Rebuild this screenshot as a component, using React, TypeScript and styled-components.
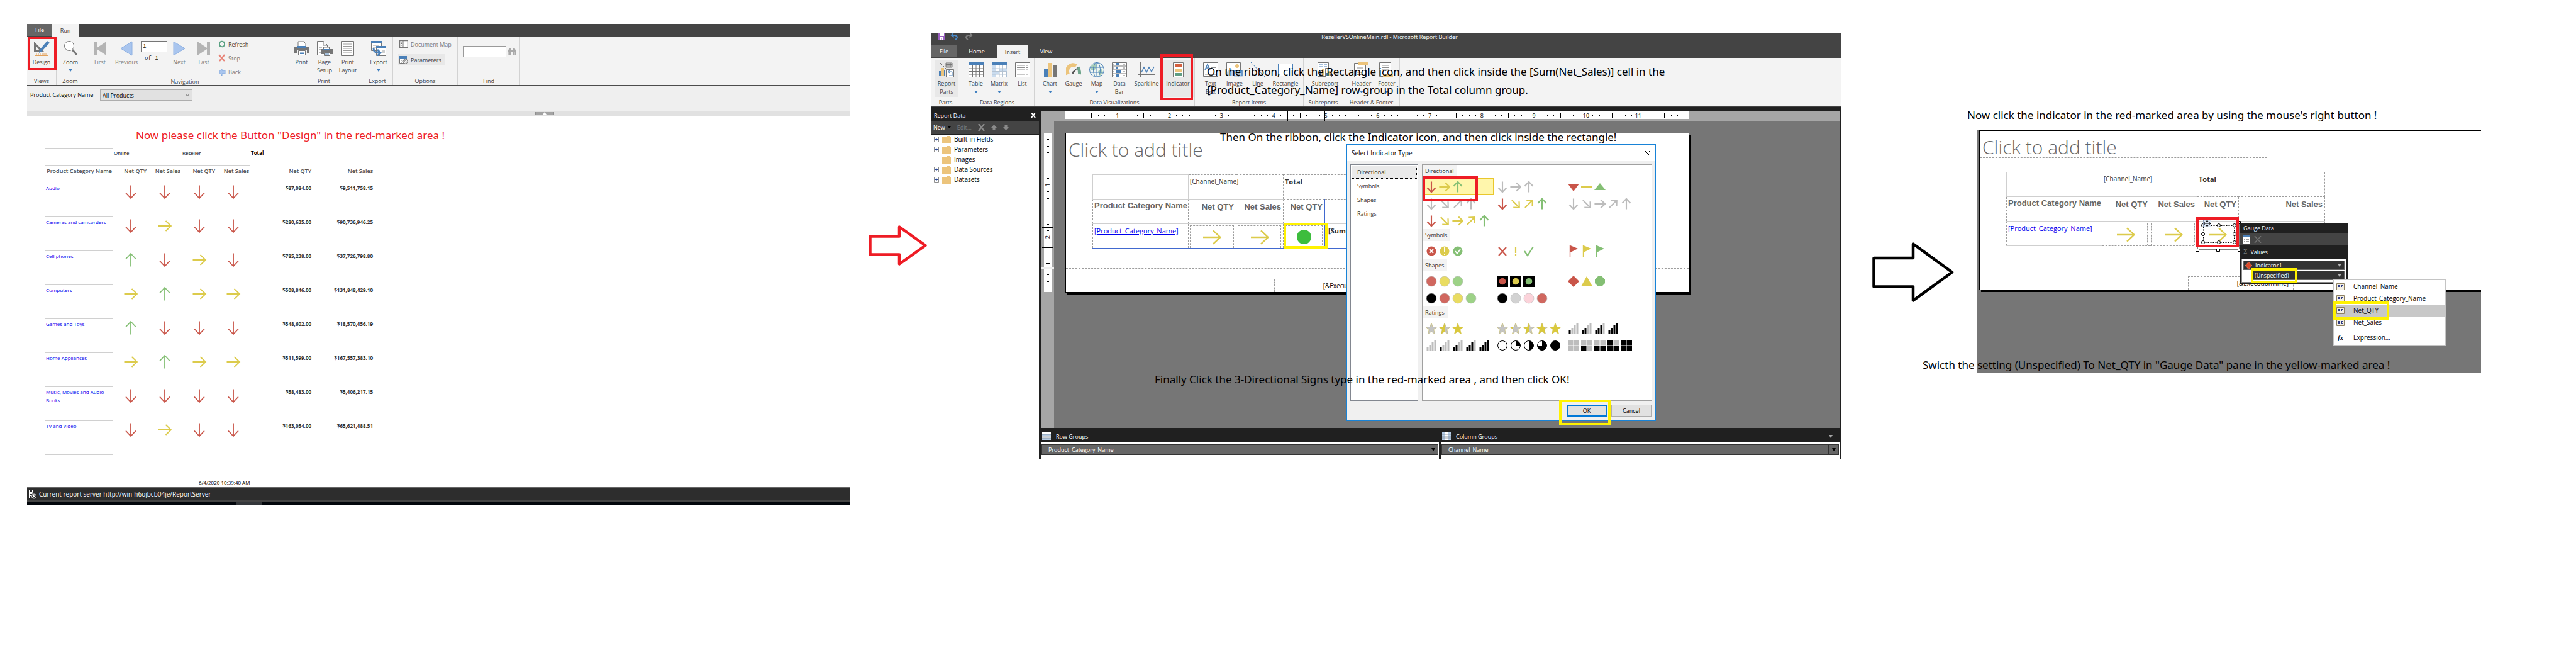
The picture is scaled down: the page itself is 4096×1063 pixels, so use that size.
import React from "react";
import styled, { createGlobalStyle, css } from "styled-components";

const UI = `"Open Sans", "Noto Sans", "Liberation Sans", sans-serif`;
const RED = "#ee1c25";
const YELLOW = "#fff200";
const DOWN = "#c95549";
const SIDE = "#dccb4c";
const UP = "#84bf74";
const MUTE = "#bcbcbc";

const GlobalStyle = createGlobalStyle`
  *, *::before, *::after { box-sizing: border-box; }
  body { margin: 0; background: #fff; color: #000; font-family: ${UI}; font-size: 9px; line-height: 13px; }
  button, input, select { font: inherit; color: inherit; margin: 0; }
  button { border: 0; background: none; padding: 0; }
  svg { display: block; flex: none; }
  p, h1, h2, ul { margin: 0; padding: 0; font-weight: inherit; font-size: inherit; list-style: none; }
`;

/* ---------- page frame ---------- */

const Page = styled.main`
  display: grid;
  grid-template-columns: 1309fr 129px 1446fr 217px 801fr;
  align-items: start;
  padding: 38px 151px 0 43px;
  min-height: 100vh;
  overflow: hidden;
`;

const Panel = styled.section<{ $drop: number }>`
  position: relative;
  min-width: 0;
  margin-top: ${(p) => p.$drop}px;
`;

const StepArrow = styled.div<{ $drop: number; $indent: number }>`
  margin-top: ${(p) => p.$drop}px;
  padding-left: ${(p) => p.$indent}px;
`;

const captionText = css`
  font-family: "Noto Sans", "Open Sans", sans-serif;
  font-size: 17px;
  line-height: 29px;
  white-space: nowrap;
`;

const LeadCaption = styled.p`
  ${captionText}
  margin: 16px 0 6px 173px;
  color: ${RED};
`;

const Caption = styled.p<{ $x: number; $y: number; $z?: number }>`
  ${captionText}
  position: absolute;
  left: ${(p) => p.$x}px;
  top: ${(p) => p.$y}px;
  z-index: ${(p) => p.$z ?? 4};
  pointer-events: none;
`;

const Mark = styled.div<{ $x: number; $y: number; $w: number; $h: number; $color: string }>`
  position: absolute;
  left: ${(p) => p.$x}px;
  top: ${(p) => p.$y}px;
  width: ${(p) => p.$w}px;
  height: ${(p) => p.$h}px;
  border: 4px solid ${(p) => p.$color};
  z-index: 5;
  pointer-events: none;
`;

/* ---------- ribbon ---------- */

const Ribbon = styled.div`
  display: flex;
  height: 77px;
  background: #f3f3f3;
  color: #444;
`;

const GroupBox = styled.div<{ $w: number; $pad: number }>`
  display: flex;
  flex-direction: column;
  justify-content: space-between;
  flex: none;
  width: ${(p) => p.$w}px;
  padding-top: 3px;
  border-right: 1px solid #d2d2d2;
  > div { display: flex; padding-left: ${(p) => p.$pad}px; }
  > span { text-align: center; }
`;

const Tool = styled.button<{ $w: number; $on?: boolean; $dim?: boolean }>`
  display: flex;
  flex-direction: column;
  align-items: center;
  flex: none;
  width: ${(p) => p.$w}px;
  min-height: 59px;
  padding: 4px 0 2px;
  background: ${(p) => (p.$on ? "#e8e8e8" : "transparent")};
  color: ${(p) => (p.$dim ? "#7c7c7c" : "#444")};
  white-space: nowrap;
  > svg:first-child { margin-bottom: 3px; }
`;

const DropMark = styled.i`
  width: 0;
  height: 0;
  margin-top: 5px;
  border: 3px solid transparent;
  border-top: 4px solid #3f7fc0;
  border-bottom: 0;
`;

const ToolStack = styled.div<{ $gap: number }>`
  display: flex;
  flex-direction: column;
  align-items: flex-start;
  gap: ${(p) => p.$gap}px;
`;

const LineTool = styled.button<{ $on?: boolean; $dim?: boolean }>`
  display: flex;
  align-items: center;
  gap: 4px;
  height: 18px;
  padding: 0 5px 0 2px;
  background: ${(p) => (p.$on ? "#e8e8e8" : "transparent")};
  color: ${(p) => (p.$dim ? "#7c7c7c" : "#444")};
`;

function Group({ w, pad = 6, title, children }: { w: number; pad?: number; title: string; children: React.ReactNode }) {
  return (
    <GroupBox $w={w} $pad={pad}>
      <div>{children}</div>
      <span>{title}</span>
    </GroupBox>
  );
}

/* ---------- ribbon icons ---------- */

const Svg = ({ w = 24, h = 24, children }: { w?: number; h?: number; children: React.ReactNode }) => (
  <svg width={w} height={h} viewBox={`0 0 ${w} ${h}`} fill="none" aria-hidden="true">
    {children}
  </svg>
);

const G = "#767676";
const B = "#4a80b8";
const Y = "#ecc47c";

const icons = {
  design: (
    <Svg w={26}>
      <path d="M1 1v17h17zM5 9l5 6H5z" fill={G} fillRule="evenodd" />
      <path d="M22 0l4 3-13 14-4 2 1-5z" fill={B} />
      <rect x="2.5" y="19.5" width="21" height="4" stroke="#e3a25c" />
      <path d="M5 20v2M8 20v2M11 20v2M14 20v2M17 20v2M20 20v2" stroke="#e3a25c" />
    </Svg>
  ),
  zoom: (
    <Svg>
      <circle cx="10" cy="8" r="7.5" fill="#fff" stroke={G} />
      <path d="M15 14l7 8" stroke={G} strokeWidth="3" />
    </Svg>
  ),
  first: (
    <Svg w={22}>
      <path d="M1 1h5v10L21 1v22L6 13v10H1z" fill="#b4b4b4" />
    </Svg>
  ),
  last: (
    <Svg w={22}>
      <path d="M21 1h-5v10L1 1v22l15-10v10h5z" fill="#b4b4b4" />
    </Svg>
  ),
  prev: (
    <Svg w={20}>
      <path d="M19 1v22L1 12z" fill="#a9c5ee" stroke="#8fb1e2" />
    </Svg>
  ),
  next: (
    <Svg w={20}>
      <path d="M1 1v22l18-11z" fill="#a9c5ee" stroke="#8fb1e2" />
    </Svg>
  ),
  refresh: (
    <Svg w={12} h={12}>
      <path d="M2 7V4q3-4 7-1M10 5v3q-3 4-7 1" stroke="#5aa183" strokeWidth="2" />
      <path d="M11 0v5H7zM1 12V7h4z" fill="#5aa183" />
    </Svg>
  ),
  stop: (
    <Svg w={12} h={12}>
      <path d="M1 1l9 10M10 1L2 11" stroke="#e88478" strokeWidth="2.4" />
    </Svg>
  ),
  back: (
    <Svg w={12} h={12}>
      <path d="M6 1v3h5v5H6v3L1 6.500z" fill="#a9c5ee" stroke="#83a9dd" />
    </Svg>
  ),
  print: (
    <Svg>
      <path d="M6 10V1h9l3 3v6" fill="#fff" stroke={G} />
      <path d="M0 9h24v10h-4v-4H4v4H0z" fill={G} />
      <path d="M5 8h14v3H5z" fill={B} />
      <path d="M6.500 15.500h11v7h-11z" fill="#fff" stroke={G} />
      <path d="M9 18h6M9 20.500h6" stroke={B} />
    </Svg>
  ),
  pageSetup: (
    <Svg w={26}>
      <path d="M1.500.5h10l6 6v16h-16zM11 1v6h6" fill="#fff" stroke={G} />
      <path d="M4 10h5M4 14h3M4 18h3" stroke={G} />
      <path d="M11.500 14v-4h9v4" fill="#fff" stroke={G} />
      <path d="M8 13h18v8H8z" fill={G} />
      <path d="M11 13h11v2H11z" fill={B} />
      <path d="M12.500 18.500h9v5h-9z" fill="#fff" stroke={G} />
      <path d="M14 21h6" stroke={B} />
    </Svg>
  ),
  layout: (
    <Svg w={20}>
      <path d="M.5.5h19v23H.5z" fill="#fff" stroke={G} />
      <path d="M3 5h14M3 8.500h14M3 12h14M3 15.500h14M3 19h14" stroke="#9a9a9a" />
    </Svg>
  ),
  export: (
    <Svg>
      <path d="M.5.5h16v15H.5z" fill="#fff" stroke={G} />
      <path d="M0 0h17v4H0z" fill={B} />
      <path d="M3 7h9M3 10h9" stroke="#9a9a9a" />
      <path d="M8.500 8.500h15v15h-15z" fill="#fff" stroke={G} />
      <path d="M8 8h16v4H8z" fill={B} />
      <path d="M4 12q0 7 9 7M10 14l5 5-5 5" stroke={B} strokeWidth="3" />
      <path d="M17 16h5M17 19h5" stroke="#9a9a9a" />
    </Svg>
  ),
  docMap: (
    <Svg w={14} h={12}>
      <path d="M.5.5h13v11H.5z" fill="#fff" stroke={G} strokeWidth="1.500" />
      <path d="M2 3h3M2 5.500h3M2 8h3M6 1v10" stroke={G} />
    </Svg>
  ),
  params: (
    <Svg w={14} h={13}>
      <path d="M.5.5h11v11H.5z" fill="#fff" stroke={G} />
      <path d="M0 0h12v4H0z" fill={B} />
      <path d="M2 7h3M2 10h3" stroke={G} />
      <circle cx="9.500" cy="8.500" r="3.500" fill="#f3f3f3" stroke={G} />
      <circle cx="9.500" cy="8.500" r="1.200" stroke={G} />
    </Svg>
  ),
  find: (
    <Svg w={14} h={12}>
      <path d="M3 0h3v12H0V6zM8 0h3l3 6v6H8zM6 4h2v3H6z" fill="#a9a9a9" />
      <path d="M2 7v4M11 7v4" stroke="#ddd" />
    </Svg>
  ),
  parts: (
    <Svg>
      <path d="M1 0l10 10" stroke={G} />
      <path d="M11 1h10v7H11zM11 3.500h10M11 6h10M14.500 1v7M18 1v7" stroke={G} />
      <path d="M0 14h3v7H0zM8 13h2v8H8z" fill={B} />
      <path d="M4 9h4v12H4z" fill={Y} />
      <path d="M11.500 11.500h12v12h-12z" fill="#fff" stroke={G} />
      <path d="M14 15h7v6h-5M17 13l-3 2 3 2" stroke={B} />
    </Svg>
  ),
  table: (
    <Svg>
      <path d="M.5.5h23v23H.5z" fill="#fff" stroke={G} />
      <path d="M0 0h24v5H0z" fill={B} />
      <path d="M0 10h24M0 14.500h24M0 19h24M6.500 5v19M12 5v19M17.500 5v19" stroke={G} />
    </Svg>
  ),
  matrix: (
    <Svg>
      <path d="M.5.5h23v23H.5z" fill="#fff" stroke="#a9bdd3" />
      <path d="M0 5h6v19H0zM6 14h6v5H6zM12 10h12v5H12z" fill="#cadcef" />
      <path d="M0 0h24v5H0z" fill={B} />
      <path d="M0 10h24M0 14.500h24M0 19h24M6.500 5v19M12 5v19M17.500 5v19" stroke="#b5c3d2" />
    </Svg>
  ),
  list: (
    <Svg>
      <path d="M.5.5h23v23H.5z" fill="#fff" stroke={G} />
      <path d="M3 5h13M3 8.500h13M3 12h13M3 15.500h13M3 19h13M18 5h3M18 8.500h3M18 12h3M18 15.500h3M18 19h3" stroke="#8f8f8f" />
    </Svg>
  ),
  chart: (
    <Svg w={20}>
      <path d="M0 10h6v14H0z" fill={B} />
      <path d="M7 1h6v23H7z" fill={Y} />
      <path d="M14 5h6v19h-6z" fill={G} />
    </Svg>
  ),
  gauge: (
    <Svg>
      <path d="M3 19A9 10 0 0 1 16 6" stroke={Y} strokeWidth="6" />
      <path d="M19 8q3 4 2.500 11" stroke="#6fa58c" strokeWidth="5" />
      <path d="M20 7L9 16l2 3z" fill="#555" />
    </Svg>
  ),
  map: (
    <Svg>
      <circle cx="12" cy="12" r="11.500" fill="#eef5f1" stroke={B} />
      <path d="M3 6q5-6 9-2l-2 7q-5 3-8 0zM14 14l6-3 2 5-5 6z" fill="#a6cdb9" />
      <ellipse cx="12" cy="12" rx="5.500" ry="11.500" stroke={B} />
      <path d="M12 0v24M1 8h22M1 16h22" stroke={B} />
    </Svg>
  ),
  dataBar: (
    <Svg>
      <path d="M.5.5h23v23H.5zM0 6h24M0 12h24M0 18h24M14.500 0v24" fill="#fff" stroke={G} />
      <path d="M6 1h6v4H6zM6 7h4v4H6zM6 13h8v4H6zM6 19h5v4H6z" fill={B} />
      <path d="M17 3h4M17 9h4M17 15h4M17 21h4M2 3h2M2 9h2M2 15h2M2 21h2" stroke={G} />
    </Svg>
  ),
  spark: (
    <Svg w={26}>
      <path d="M3.500 0v24M0 4.500h26M0 19.500h26" stroke={G} />
      <path d="M5 16l4-8 4 8 4-8 4 7 4-8" stroke={B} strokeWidth="1.400" />
    </Svg>
  ),
  indicator: (
    <Svg w={17}>
      <path d="M.5.5h16v23H.5z" fill="#fff" stroke={G} />
      <path d="M3 3h11v5H3z" fill="#d4603f" />
      <path d="M3 10h11v5H3z" fill={Y} />
      <path d="M3 17h11v5H3z" fill="#5f9d83" />
    </Svg>
  ),
  textBox: (
    <Svg>
      <path d="M.5.500h23v22H.5z" fill="#fff" stroke={G} />
      <path d="M3 12l4-9 4 9M4.500 9h5" stroke={B} strokeWidth="1.400" />
      <path d="M12 4.500h9M12 8.500h9M3 15.500h18M3 19h18" stroke="#8f8f8f" />
    </Svg>
  ),
  image: (
    <Svg w={26}>
      <path d="M.5.500h22v21H.5z" fill="#fff" stroke={G} />
      <circle cx="17" cy="6" r="3" fill={Y} />
      <path d="M1 21v-6l6-5 6 6v5z" fill="#b8cfe6" />
      <path d="M13 13.500h12v8H13z" fill="#dfeaf5" stroke={B} strokeWidth="1.600" />
      <path d="M19 22v2M16 24h6" stroke={B} />
    </Svg>
  ),
  line: (
    <Svg>
      <path d="M1 0l22 23" stroke={B} />
    </Svg>
  ),
  rect: (
    <Svg>
      <path d="M.5 2.500h23v19H.5z" fill="#fff" stroke={B} strokeWidth="1.200" />
    </Svg>
  ),
  subreport: (
    <Svg>
      <path d="M.5.500h17v22H.5z" fill="#fff" stroke={G} />
      <path d="M3 4h5M3 7h5M10 4h5M10 7h5" stroke={B} />
      <path d="M3 14h3v7H3z" fill={B} />
      <path d="M7 10h3v11H7z" fill={Y} />
      <path d="M12.500 9.500h10v14h-10z" fill="#fff" stroke={G} />
      <path d="M14 17h2v5h-2z" fill={B} />
      <path d="M17 14h2v8h-2z" fill={Y} />
      <path d="M20 18h2v4h-2z" fill={G} />
    </Svg>
  ),
  header: (
    <Svg>
      <path d="M.5 1.500h18v22H.5z" fill="#fff" stroke={G} />
      <path d="M7 0h15v5H7z" fill={Y} />
      <path d="M4 9h11M4 12.500h11M4 16h11M4 19.500h11" stroke="#8f8f8f" />
    </Svg>
  ),
  footer: (
    <Svg>
      <path d="M.5.500h18v22H.5z" fill="#fff" stroke={G} />
      <path d="M4 5h11M4 8.500h11M4 12h11M4 15.500h11" stroke="#8f8f8f" />
      <path d="M6 19h16v5H6z" fill={Y} />
    </Svg>
  ),
};

/* ---------- indicator glyphs ---------- */

const TURN = { right: 0, down: 90, up: -90, fall: 45, rise: -45 };
type Dir = keyof typeof TURN;

function Arrow({ dir, color, size = 24, box = "0 0 24 24", weight = 1.8 }: { dir: Dir; color: string; size?: number; box?: string; weight?: number }) {
  return (
    <svg width={size} height={size} viewBox={box} fill="none" stroke={color} strokeWidth={weight} aria-hidden="true">
      <g transform={`rotate(${TURN[dir]} 12 12)`}>
        <path d="M1.500 12H22M13.500 4l8.500 8-8.500 8" />
      </g>
    </svg>
  );
}

const Glyph = ({ children }: { children: React.ReactNode }) => (
  <svg width="18" height="18" viewBox="0 0 18 18" fill="none" aria-hidden="true">
    {children}
  </svg>
);

const A = (dir: Dir, color: string) => <Arrow dir={dir} color={color} size={18} box="1 1 22 22" weight={2.6} />;
const Dot = (color: string) => (
  <Glyph>
    <circle cx="9" cy="9" r="8" fill={color} stroke="#b9b9b9" strokeWidth=".6" />
  </Glyph>
);
const Lamp = (color: string) => (
  <Glyph>
    <path d="M0 0h18v18H0z" fill="#000" />
    <circle cx="9" cy="9" r="5.300" fill={color} />
  </Glyph>
);
const Flag = (color: string) => (
  <Glyph>
    <path d="M3.500 0v18" stroke={color} strokeWidth="1.400" />
    <path d="M4 0l12 5-12 6z" fill={color} />
  </Glyph>
);
const Shape = (d: string, color: string) => (
  <Glyph>
    <path d={d} fill={color} />
  </Glyph>
);
const Round = (color: string, d: string) => (
  <Glyph>
    <circle cx="9" cy="9" r="7.500" fill={color} />
    <path d={d} stroke="#fff" strokeWidth="1.800" />
  </Glyph>
);
const Stroke = (color: string, d: string, w = 2.2) => (
  <Glyph>
    <path d={d} stroke={color} strokeWidth={w} />
  </Glyph>
);
const STAR = "M9 0l2.300 6.500H18l-5.300 4.200 2 7.300L9 13.700 3.300 18l2-7.300L0 6.500h6.700z";
const Star = (part: number) => {
  const id = `star-${part * 100}`;
  return (
    <Glyph>
      <defs>
        <linearGradient id={id}>
          <stop offset={part} stopColor="#dac93c" />
          <stop offset={part} stopColor="#c4c4c4" />
        </linearGradient>
      </defs>
      <path d={STAR} fill={`url(#${id})`} stroke={part === 1 ? "#d3c34a" : "#c2b75e"} strokeWidth=".6" />
    </Glyph>
  );
};
const Bars = (n: number) => (
  <Glyph>
    {[0, 1, 2, 3].map((i) => (
      <path key={i} d={`M${1.5 + i * 4} ${12 - i * 4}h3V18h-3z`} fill={i < n ? "#000" : "#bdbdbd"} />
    ))}
  </Glyph>
);
const PIE = ["", "M9 9V1.500A7.500 7.500 0 0 1 16.500 9z", "M9 1.500a7.500 7.500 0 0 1 0 15z", "M9 9V1.500A7.500 7.500 0 1 1 1.500 9z", ""];
const Pie = (n: number) => (
  <Glyph>
    <circle cx="9" cy="9" r="7.500" fill={n === 4 ? "#000" : "#fff"} stroke="#000" />
    <path d={PIE[n]} fill="#000" />
  </Glyph>
);
const Boxes = (n: number) => (
  <Glyph>
    {["M0 9.500h8.500V18H0z", "M9.500 9.500H18V18H9.500z", "M0 0h8.500v8.500H0z", "M9.500 0H18v8.500H9.500z"].map((d, i) => (
      <path key={i} d={d} fill={i < n ? "#000" : "#bdbdbd"} />
    ))}
  </Glyph>
);

const R = "#d0675f";
const YL = "#e9dc62";
const GR = "#9dd287";

const SECTIONS: { name: string; options: React.ReactNode[][] }[] = [
  {
    name: "Directional",
    options: [
      [A("down", DOWN), A("right", SIDE), A("up", UP)],
      [A("down", MUTE), A("right", MUTE), A("up", MUTE)],
      [Shape("M0 4h18L9 16z", DOWN), Shape("M0 7h18v4H0z", SIDE), Shape("M0 14h18L9 3z", UP)],
      [A("down", MUTE), A("fall", MUTE), A("rise", MUTE), A("up", MUTE)],
      [A("down", DOWN), A("fall", SIDE), A("rise", SIDE), A("up", UP)],
      [A("down", MUTE), A("fall", MUTE), A("right", MUTE), A("rise", MUTE), A("up", MUTE)],
      [A("down", DOWN), A("fall", SIDE), A("right", SIDE), A("rise", SIDE), A("up", UP)],
    ],
  },
  {
    name: "Symbols",
    options: [
      [Round(DOWN, "M6 6l6 6M12 6l-6 6"), Round(SIDE, "M9 3v8M9 13v2"), Round(UP, "M5 9l3 4 5-7")],
      [Stroke(DOWN, "M3 3l12 13M15 3L3 16"), Stroke(SIDE, "M9 2v10M9 14v3"), Stroke(UP, "M2 9l5 7 9-14")],
      [Flag(DOWN), Flag(SIDE), Flag(UP)],
    ],
  },
  {
    name: "Shapes",
    options: [
      [Dot(R), Dot(YL), Dot(GR)],
      [Lamp(DOWN), Lamp(SIDE), Lamp(UP)],
      [
        Shape("M9 0l9 9-9 9-9-9z", DOWN),
        Shape("M9 1l9 16H0z", SIDE),
        Shape("M6 1h6l5 5v6l-5 5H6l-5-5V6z", UP),
      ],
      [Dot("#000"), Dot(R), Dot(YL), Dot(GR)],
      [Dot("#000"), Dot("#d2d2d2"), Dot("#fbd3da"), Dot(R)],
    ],
  },
  {
    name: "Ratings",
    options: [
      [Star(0), Star(0.5), Star(1)],
      [Star(0), Star(0.25), Star(0.5), Star(0.75), Star(1)],
      [Bars(1), Bars(2), Bars(3), Bars(4)],
      [Bars(0), Bars(1), Bars(2), Bars(3), Bars(4)],
      [Pie(0), Pie(1), Pie(2), Pie(3), Pie(4)],
      [Boxes(0), Boxes(1), Boxes(2), Boxes(3), Boxes(4)],
    ],
  },
];

/* ---------- panel 1 : running report ---------- */

const TabBar = styled.nav`
  display: flex;
  height: 20px;
  background: #444;
`;

const Tab = styled.button<{ $w: number; $kind?: "file" | "active" }>`
  width: ${(p) => p.$w}px;
  height: ${(p) => (p.$kind === "active" ? "100%" : "19px")};
  background: ${(p) => (p.$kind === "file" ? "#666" : p.$kind === "active" ? "#f3f3f3" : "transparent")};
  color: ${(p) => (p.$kind === "active" ? "#444" : "#fff")};
  & + &[data-gap] { margin-left: 8px; }
`;

const PageNo = styled.div`
  display: flex;
  flex-direction: column;
  width: 42px;
  margin-right: 1px;
  padding-top: 4px;
  color: #222;
  font-family: "Liberation Mono", monospace;
  label { padding: 4px 0 0 6px; }
  input { width: 42px; height: 18px; border: 1px solid #767676; background: #fff; padding: 0 2px; }
`;

const FindBox = styled.div`
  display: flex;
  align-items: center;
  gap: 2px;
  padding-top: 12px;
  input { width: 69px; height: 18px; border: 1px solid #9a9a9a; background: #fff; }
`;

const ParamBar = styled.div`
  height: 42px;
  padding: 5px;
  display: flex;
  align-items: flex-start;
  gap: 10px;
  border-top: 2px solid #4c4c4c;
  background: #efefef;
  label { line-height: 18px; width: 101px; white-space: nowrap; }
`;

const SelectBox = styled.div`
  position: relative;
  width: 147px;
  height: 18px;
  select {
    appearance: none;
    width: 100%;
    height: 100%;
    padding: 0 3px;
    border: 1px solid #adadad;
    border-radius: 0;
    background: #e1e1e1;
  }
  svg { position: absolute; right: 4px; top: 6px; pointer-events: none; }
`;

const Splitter = styled.div`
  height: 7px;
  background: #e1e1e1;
  padding: 1px 0 0 808px;
  button { display: flex; justify-content: center; width: 30px; height: 5px; background: #a3a3a3; border: 1px solid #8e8e8e; border-top: 0; }
`;

const DataTable = styled.table`
  width: 524px;
  margin-left: 28px;
  table-layout: fixed;
  border-collapse: separate;
  border-spacing: 0;
  font-size: 8px;
  line-height: 13px;
  th, td { padding: 0; vertical-align: top; text-align: right; white-space: nowrap; }
`;

const BandHead = styled.th<{ $kind?: "corner" | "total" }>`
  && { height: 28px; padding: 1px; text-align: left; font-weight: ${(p) => (p.$kind === "total" ? 700 : 400)}; }
  border-bottom: ${(p) => (p.$kind === "total" ? 0 : "1px solid #d0d0d0")};
  ${(p) => p.$kind === "corner" && css`border: 1px solid #d0d0d0;`}
`;

const ColHead = styled.th`
  && { height: 28px; padding: 2px 2px 0 0; }
  border-bottom: 1px solid #d0d0d0;
  color: #555;
  font-size: 9px;
  font-weight: 600;
`;

const NameCell = styled.th`
  && { height: 54px; padding: 1px 2px; text-align: left; white-space: normal; font-weight: 400; }
  border-bottom: 1px solid #d0d0d0;
  a { color: #0000ee; }
`;

const SignCell = styled.td`
  && { padding-top: 2px; }
  svg { margin: 0 auto; }
`;

const MoneyCell = styled.td`
  && { padding: 1px 2px 0 0; }
  color: #333;
  font-weight: 700;
`;

const Stamp = styled.p`
  margin: 37px 0 1px 273px;
  font-size: 8px;
`;

const StatusBar = styled.footer`
  display: flex;
  align-items: center;
  gap: 4px;
  height: 23px;
  padding-left: 3px;
  border-top: 2px solid #666;
  border-bottom: 3px solid #444;
  background: #2d2d2d;
  color: #fff;
  font-size: 10px;
`;

const TaskStrip = styled.div`
  height: 6px;
  padding-left: 332px;
  background: #02060c;
  i { display: block; width: 42px; height: 6px; background: #33363a; }
`;

const ROWS: [string, string, string, string][] = [
  ["Audio", "dddd", "$87,084.00", "$9,511,758.15"],
  ["Cameras and camcorders", "drdd", "$280,635.00", "$90,736,946.25"],
  ["Cell phones", "udrd", "$785,238.00", "$37,726,798.80"],
  ["Computers", "rurr", "$508,846.00", "$131,848,429.10"],
  ["Games and Toys", "uddd", "$548,602.00", "$18,570,456.19"],
  ["Home Appliances", "rurr", "$511,599.00", "$167,557,383.10"],
  ["Music, Movies and Audio Books", "dddd", "$58,483.00", "$5,406,217.15"],
  ["TV and Video", "drdd", "$163,054.00", "$65,621,488.51"],
];

const SIGN: Record<string, [Dir, string]> = { d: ["down", DOWN], r: ["right", SIDE], u: ["up", UP] };

function RunPanel() {
  return (
    <Panel $drop={0}>
      <TabBar>
        <Tab $w={40} $kind="file">File</Tab>
        <Tab $w={42} $kind="active" data-gap>Run</Tab>
      </TabBar>
      <Ribbon>
        <Group w={47} pad={0} title="Views">
          <Tool $w={46}>{icons.design}<span>Design</span></Tool>
        </Group>
        <Group w={44} pad={0} title="Zoom">
          <Tool $w={44}>{icons.zoom}<span>Zoom</span><DropMark /></Tool>
        </Group>
        <Group w={321} title="Navigation">
          <Tool $w={38} $dim>{icons.first}<span>First</span></Tool>
          <Tool $w={46} $dim>{icons.prev}<span>Previous</span></Tool>
          <PageNo>
            <input id="page-no" defaultValue="1" />
            <label htmlFor="page-no">of 1</label>
          </PageNo>
          <Tool $w={36} $dim>{icons.next}<span>Next</span></Tool>
          <Tool $w={42} $dim>{icons.last}<span>Last</span></Tool>
          <ToolStack $gap={4}>
            <LineTool>{icons.refresh}Refresh</LineTool>
            <LineTool $dim>{icons.stop}Stop</LineTool>
            <LineTool $dim>{icons.back}Back</LineTool>
          </ToolStack>
        </Group>
        <Group w={121} title="Print">
          <Tool $w={37}>{icons.print}<span>Print</span></Tool>
          <Tool $w={36}>{icons.pageSetup}<span>Page<br />Setup</span></Tool>
          <Tool $w={38}>{icons.layout}<span>Print<br />Layout</span></Tool>
        </Group>
        <Group w={49} pad={3} title="Export">
          <Tool $w={46}>{icons.export}<span>Export</span><DropMark /></Tool>
        </Group>
        <Group w={103} pad={8} title="Options">
          <ToolStack $gap={7}>
            <LineTool $dim>{icons.docMap}Document Map</LineTool>
            <LineTool $on>{icons.params}Parameters</LineTool>
          </ToolStack>
        </Group>
        <Group w={99} pad={8} title="Find">
          <FindBox>
            <input aria-label="Find" />
            {icons.find}
          </FindBox>
        </Group>
      </Ribbon>
      <ParamBar>
        <label htmlFor="category">Product Category Name</label>
        <SelectBox>
          <select id="category">
            <option>All Products</option>
          </select>
          <svg width="8" height="6" viewBox="0 0 8 6" fill="none" stroke="#555" aria-hidden="true">
            <path d="M.5 1L4 4.500 7.500 1" />
          </svg>
        </SelectBox>
      </ParamBar>
      <Splitter>
        <button aria-label="Collapse parameters">
          <svg width="6" height="4" viewBox="0 0 6 4" aria-hidden="true"><path d="M3 0l3 4H0z" fill="#fff" /></svg>
        </button>
      </Splitter>
      <LeadCaption>Now please click the Button "Design" in the red-marked area !</LeadCaption>
      <DataTable>
        <colgroup>
          {[109, 55, 54, 55, 54, 99, 98].map((w, i) => (
            <col key={i} style={{ width: w }} />
          ))}
        </colgroup>
        <thead>
          <tr>
            <BandHead $kind="corner" />
            <BandHead colSpan={2}>Online</BandHead>
            <BandHead colSpan={2}>Reseller</BandHead>
            <BandHead colSpan={2} $kind="total">Total</BandHead>
          </tr>
          <tr>
            {["Product Category Name", "Net QTY", "Net Sales", "Net QTY", "Net Sales", "Net QTY", "Net Sales"].map((t, i) => (
              <ColHead key={i}>{t}</ColHead>
            ))}
          </tr>
        </thead>
        <tbody>
          {ROWS.map(([name, signs, qty, sales]) => (
            <tr key={name}>
              <NameCell><a href="#category">{name}</a></NameCell>
              {signs.split("").map((s, i) => (
                <SignCell key={i}><Arrow dir={SIGN[s][0]} color={SIGN[s][1]} /></SignCell>
              ))}
              <MoneyCell>{qty}</MoneyCell>
              <MoneyCell>{sales}</MoneyCell>
            </tr>
          ))}
        </tbody>
      </DataTable>
      <Stamp>6/4/2020 10:39:40 AM</Stamp>
      <StatusBar>
        <svg width="12" height="15" viewBox="0 0 12 15" fill="none" stroke="#fff" aria-hidden="true">
          <path d="M.5.500h5v4h-5zM.5 6.500h5M.5 4v10M.5 9.500h3M.5 13.500h3" />
          <circle cx="8" cy="10.500" r="3.500" />
          <path d="M7 8.500l3 2-3 2z" fill="#fff" stroke="none" />
        </svg>
        Current report server http://win-h6ojbcb04je/ReportServer
      </StatusBar>
      <TaskStrip><i /></TaskStrip>
      <Mark $x={1} $y={20} $w={46} $h={54} $color={RED} />
    </Panel>
  );
}

/* ---------- shared report design page ---------- */

const Sheet = styled.div`
  width: 992px;
  border: 1px solid #000;
  background: #fff;
  box-shadow: 3px 3px 0 #000;
`;

const SheetBody = styled.div`
  height: 215px;
  border-bottom: 1px dashed #9c9c9c;
`;

const TitleBox = styled.h1`
  width: 457px;
  height: 43px;
  padding-left: 4px;
  border: dashed #9c9c9c;
  border-width: 0 1px 1px 0;
  color: #666;
  font-size: 30px;
  font-weight: 300;
  line-height: 52px;
`;

const Matrix = styled.table`
  width: 507px;
  margin: 22px 0 0 42px;
  table-layout: fixed;
  border-collapse: collapse;
  td, th { height: 39px; padding: 3px 2px 0; border: 1px dashed #9c9c9c; vertical-align: top; white-space: nowrap; text-align: left; line-height: 15px; }
`;

const Head = styled.th<{ $text?: number; $solid?: boolean; $bold?: boolean }>`
  && {
    color: #333;
    font-size: ${(p) => p.$text ?? 11}px;
    font-weight: ${(p) => (p.$bold ? 700 : 400)};
    ${(p) => p.$solid && css`border: 1px solid #cfcfcf;`}
    ${(p) => !p.$bold && css`border-bottom: 1px solid #cfcfcf;`}
  }
`;

const SubHead = styled.th<{ $blue?: boolean; $left?: boolean }>`
  && {
    padding-right: 3px;
    padding-top: ${(p) => (p.$left ? 2 : 4)}px;
    color: #666;
    font-family: "Liberation Sans", Arial, sans-serif;
    font-size: 13px;
    font-weight: 700;
    text-align: ${(p) => (p.$left ? "left" : "right")};
    border-bottom: 1px solid #cfcfcf;
    ${(p) => p.$blue && css`border-left: 1px solid #4169cf;`}
  }
`;

const BodyCell = styled.td<{ $blue?: boolean; $blueLeft?: boolean; $solid?: boolean }>`
  && {
    font-size: 11px;
    ${(p) => p.$solid && css`border-bottom: 1px solid #cfcfcf;`}
    ${(p) => p.$blue && css`border-bottom: 1px solid #4169cf;`}
    ${(p) => p.$blueLeft && css`border-left: 1px solid #4169cf; padding-left: 5px; font-weight: 700; color: #333;`}
  }
  a { color: #0000ee; }
`;

const SignBody = styled(BodyCell)`
  && { padding: 2px 3px 0 2px; }
`;

const SignFrame = styled.div`
  display: flex;
  justify-content: center;
  align-items: center;
  height: 36px;
  border: 1px dashed #9c9c9c;
  border-bottom: 0;
`;

const FooterArea = styled.div`
  padding: 16px 0 0 331px;
  div {
    width: 168px;
    height: 21px;
    padding-right: 7px;
    border: dashed #9c9c9c;
    border-width: 1px 1px 0;
    font-size: 10px;
    line-height: 21px;
    text-align: right;
  }
`;

function ReportSheet({ finished }: { finished?: boolean }) {
  const blue = !finished;
  return (
    <Sheet>
      <SheetBody>
        <TitleBox>Click to add title</TitleBox>
        <Matrix>
          <colgroup>
            {[152, 76, 75, 66, 137].map((w, i) => (
              <col key={i} style={{ width: w }} />
            ))}
          </colgroup>
          <tbody>
            <tr>
              <Head $solid />
              <Head colSpan={2} $text={10}>[Channel_Name]</Head>
              <Head colSpan={2} $bold>Total</Head>
            </tr>
            <tr>
              <SubHead $left>Product Category Name</SubHead>
              <SubHead>Net QTY</SubHead>
              <SubHead>Net Sales</SubHead>
              <SubHead>Net QTY</SubHead>
              <SubHead $blue={blue}>{finished ? "Net Sales" : ""}</SubHead>
            </tr>
            <tr>
              <BodyCell $blue={blue} $solid><a href="#field">[Product_Category_Name]</a></BodyCell>
              <SignBody $blue={blue}><SignFrame><Arrow dir="right" color={SIDE} size={32} /></SignFrame></SignBody>
              <SignBody $blue={blue}><SignFrame><Arrow dir="right" color={SIDE} size={32} /></SignFrame></SignBody>
              <SignBody $blue={blue}>
                <SignFrame>
                  {finished ? (
                    <Arrow dir="right" color={SIDE} size={32} />
                  ) : (
                    <svg width="23" height="23" viewBox="0 0 23 23" aria-hidden="true">
                      <circle cx="11.500" cy="11.500" r="11.500" fill="#3dbd3d" />
                    </svg>
                  )}
                </SignFrame>
              </SignBody>
              <BodyCell $blue={blue} $blueLeft={blue}>{finished ? "" : "[Sum("}</BodyCell>
            </tr>
          </tbody>
        </Matrix>
      </SheetBody>
      <FooterArea><div>[&amp;ExecutionTime]</div></FooterArea>
    </Sheet>
  );
}

/* ---------- panel 2 : designer ---------- */

const TitleBar = styled.header`
  display: grid;
  grid-template-columns: 1fr auto 1fr;
  height: 20px;
  padding: 0 0 0 11px;
  background: #444;
  color: #fff;
  > div { display: flex; gap: 8px; }
`;

const Work = styled.div`
  display: flex;
  border-top: 1px solid #444;
`;

const DataPane = styled.aside`
  flex: none;
  width: 174px;
  border-right: 3px solid #202020;
  background: #fff;
`;

const PaneTitle = styled.h2`
  display: flex;
  justify-content: space-between;
  align-items: center;
  height: 22px;
  padding: 4px 5px 0 4px;
  background: #202020;
  color: #fff;
`;

const PaneTools = styled.div`
  display: flex;
  align-items: center;
  gap: 10px;
  height: 22px;
  padding-left: 3px;
  border-bottom: 1px solid #202020;
  background: #444;
  color: #fff;
  button:disabled { color: #7d7d7d; }
  button:first-child { display: flex; align-items: center; gap: 4px; }
`;

const Tree = styled.ul`
  display: grid;
  gap: 1px;
  font-size: 10px;
  line-height: 15px;
  li { display: flex; align-items: center; gap: 5px; padding-left: 4px; height: 15px; }
`;

const Surface = styled.div`
  flex: 1;
  min-width: 0;
  border-right: 2px solid #202020;
`;

const RulerTop = styled.div`
  height: 23px;
  padding-left: 39px;
  border-top: 7px solid #202020;
  background: #a6a6a6;
  overflow: hidden;
`;

const CanvasRow = styled.div`
  display: flex;
  height: 487px;
`;

const RulerSide = styled.div`
  flex: none;
  width: 21px;
  padding-top: 18px;
  background: #a6a6a6;
`;

const Canvas = styled.div`
  flex: 1;
  min-width: 0;
  padding: 18px 0 0 18px;
  background: #767676;
  overflow: hidden;
`;

const GroupPanes = styled.div`
  display: grid;
  grid-template-columns: 633fr 637fr;
  background: #202020;
`;

const GroupPane = styled.div`
  min-width: 0;
  color: #fff;
  h2 { display: flex; align-items: center; gap: 8px; height: 22px; padding: 4px 6px 0 2px; }
  h2 > i { margin-left: auto; }
  > div { height: 27px; padding: 3px 1px 0; border-top: 1px solid #8a8a8a; background: #fff; }
  & + & { border-left: 3px solid #202020; }
`;

const GroupItem = styled.button`
  display: flex;
  align-items: center;
  width: 100%;
  height: 17px;
  padding-left: 10px;
  border: 1px solid #333;
  background: #666;
  color: #fff;
  i { margin-left: auto; }
`;

const Caret = styled.i<{ $color: string; $boxed?: boolean }>`
  display: flex;
  align-items: center;
  justify-content: center;
  align-self: stretch;
  width: 16px;
  border-left: ${(p) => (p.$boxed ? "1px solid #333" : "0")};
  &::before {
    content: "";
    border: 3px solid transparent;
    border-top: 5px solid ${(p) => p.$color};
    border-bottom: 0;
  }
`;

const TICK = 10.35;

function HorizontalRuler() {
  return (
    <svg width="992" height="16" viewBox="0 0 992 16" aria-hidden="true">
      <path d="M0 0h992v12H0z" fill="#fff" />
      {Array.from({ length: 95 }, (_, k) => k + 1).map((k) =>
        k % 8 === 0 ? (
          <text key={k} x={k * TICK} y="9.500" fontSize="9" fontFamily={UI} textAnchor="middle" fill="#000">{k / 8}</text>
        ) : (
          <path key={k} d={`M${Math.round(k * TICK)}.500 ${k % 4 === 0 ? "3v7" : "5v3"}`} stroke="#000" />
        ),
      )}
      <path d="M353.500 0v16M412.500 0v16" stroke="#000" />
    </svg>
  );
}

function VerticalRuler() {
  const ys = Array.from({ length: 20 }, (_, k) => k + 1);
  return (
    <svg width="21" height="253" viewBox="0 0 21 253" aria-hidden="true">
      <path d="M5 0h12v253H5z" fill="#fff" />
      {ys.map((k) =>
        k % 8 === 0 ? (
          <text key={k} transform={`translate(14 ${k * TICK}) rotate(-90)`} fontSize="9" fontFamily={UI} textAnchor="middle" fill="#000">{k / 8}</text>
        ) : (
          <path key={k} d={`M${k % 4 === 0 ? "8 " : "10 "}${Math.round(k * TICK)}.500h${k % 4 === 0 ? 6 : 3}`} stroke="#000" />
        ),
      )}
      <path d="M10 225.500h3M10 236.500h3M10 246.500h3M2 150.500h18M2 182.500h18" stroke="#000" />
      <path d="M0 214h21v3H0z" fill="#efefef" />
    </svg>
  );
}

const Expander = ({ open }: { open: boolean }) =>
  open ? (
    <svg width="8" height="9" viewBox="0 0 8 9" fill="#fff" aria-hidden="true">
      <path d="M.5.500h7v8h-7z" stroke="#8f8f8f" />
      <path d="M2 4.500h4M4 2.500v4" stroke="#2b4a9b" />
    </svg>
  ) : (
    <svg width="8" height="9" aria-hidden="true" />
  );

const Folder = () => (
  <svg width="14" height="12" viewBox="0 0 14 12" aria-hidden="true">
    <path d="M0 2h6l2-2h5v2h1v10H0z" fill={Y} />
  </svg>
);

const GridIcon = ({ vertical }: { vertical?: boolean }) => (
  <svg width="14" height="12" viewBox="0 0 14 12" aria-hidden="true">
    <path d="M0 0h14v12H0z" fill="#fff" />
    <path d={vertical ? "M0 0h4v12H0zM10 0h4v12h-4z" : "M0 3h14v3H0zM0 9h14v3H0z"} fill="#b4cbe4" />
    <path d="M0 3h14M0 6h14M0 9h14M4.500 0v12M9.500 0v12" stroke="#7d8894" strokeWidth=".8" />
  </svg>
);

/* dialog */

const Dialog = styled.div`
  position: absolute;
  left: 660px;
  top: 177px;
  z-index: 2;
  width: 492px;
  border: 1px solid #1883d7;
  background: #f0f0f0;
  color: #333;
`;

const DialogTitle = styled.h2`
  display: flex;
  justify-content: space-between;
  align-items: center;
  height: 26px;
  padding: 0 8px 0 7px;
  background: #fff;
  color: #000;
  font-size: 10px;
`;

const DialogBody = styled.div`
  display: flex;
  gap: 6px;
  height: 381px;
  padding: 5px 5px 0;
`;

const KindList = styled.ul`
  && { padding: 1px; }
  width: 108px;
  border: 1px solid #828790;
  background: #fff;
`;

const KindButton = styled.button<{ $on?: boolean }>`
  display: block;
  width: 100%;
  height: 21px;
  margin-bottom: 1px;
  padding-left: 8px;
  text-align: left;
  border: 1px dotted ${(p) => (p.$on ? "#000" : "transparent")};
  background: ${(p) => (p.$on ? "#eaeaea" : "transparent")};
`;

const Gallery = styled.div`
  flex: 1;
  border: 1px solid #a0a0a0;
  background: #fff;
`;

const GallerySection = styled.section`
  display: grid;
  grid-template-columns: repeat(3, 113px);
  h2 { grid-column: 1 / -1; justify-self: start; height: 19px; margin-bottom: 2px; padding: 0 5px 0 4px; background: #f3f3f3; line-height: 20px; }
`;

const OptionButton = styled.button<{ $on?: boolean }>`
  display: flex;
  align-items: center;
  gap: 3px;
  height: 27px;
  padding-left: 4px;
  border: 1px solid ${(p) => (p.$on ? "#e9c72c" : "transparent")};
  background: ${(p) => (p.$on ? "#fff6ac" : "transparent")};
`;

const DialogButtons = styled.div`
  display: flex;
  justify-content: flex-end;
  gap: 7px;
  padding: 6px;
`;

const PushButton = styled.button<{ $primary?: boolean }>`
  width: 64px;
  height: 19px;
  border: ${(p) => (p.$primary ? "2px solid #0078d7" : "1px solid #adadad")};
  background: #e1e1e1;
  color: #000;
`;

function IndicatorDialog() {
  return (
    <Dialog role="dialog" aria-label="Select Indicator Type">
      <DialogTitle>
        Select Indicator Type
        <button aria-label="Close">
          <svg width="9" height="9" viewBox="0 0 9 9" stroke="#000" aria-hidden="true"><path d="M0 0l9 9M9 0L0 9" /></svg>
        </button>
      </DialogTitle>
      <DialogBody>
        <KindList>
          {SECTIONS.map((s, i) => (
            <li key={s.name}><KindButton $on={i === 0}>{s.name}</KindButton></li>
          ))}
        </KindList>
        <Gallery>
          {SECTIONS.map((s, si) => (
            <GallerySection key={s.name}>
              <h2>{s.name}</h2>
              {s.options.map((o, i) => (
                <OptionButton key={i} $on={si === 0 && i === 0} aria-label={`${s.name} ${i + 1}`}>
                  {o.map((g, k) => (
                    <React.Fragment key={k}>{g}</React.Fragment>
                  ))}
                </OptionButton>
              ))}
            </GallerySection>
          ))}
        </Gallery>
      </DialogBody>
      <DialogButtons>
        <PushButton $primary>OK</PushButton>
        <PushButton>Cancel</PushButton>
      </DialogButtons>
    </Dialog>
  );
}

const TREE: [string, boolean][] = [
  ["Built-in Fields", true],
  ["Parameters", true],
  ["Images", false],
  ["Data Sources", true],
  ["Datasets", true],
];

function DesignPanel() {
  return (
    <Panel $drop={14}>
      <TitleBar>
        <div>
          <svg width="11" height="11" viewBox="0 0 11 11" aria-hidden="true">
            <path d="M0 0h11v11H0z" fill="#9a5fc0" /><path d="M2 0h7v5H2zM3 7h5v4H3z" fill="#fff" /><path d="M4 8h1.500v3H4z" fill="#9a5fc0" />
          </svg>
          <svg width="14" height="12" viewBox="0 0 14 12" fill="none" stroke="#4a8ac8" strokeWidth="2" aria-hidden="true">
            <path d="M5 0L2 4l4 3M2 4h6q6 3 0 7" />
          </svg>
          <svg width="14" height="12" viewBox="0 0 14 12" fill="none" stroke="#7d7d7d" strokeWidth="2" aria-hidden="true">
            <path d="M9 0l3 4-4 3M12 4H6q-6 3 0 7" />
          </svg>
        </div>
        <span>ResellerVSOnlineMain.rdl - Microsoft Report Builder</span>
      </TitleBar>
      <TabBar>
        <Tab $w={40} $kind="file">File</Tab>
        <Tab $w={64}>Home</Tab>
        <Tab $w={50} $kind="active">Insert</Tab>
        <Tab $w={57}>View</Tab>
      </TabBar>
      <Ribbon>
        <Group w={46} title="Parts">
          <Tool $w={36} $on>{icons.parts}<span>Report<br />Parts</span></Tool>
        </Group>
        <Group w={118} title="Data Regions">
          <Tool $w={37}>{icons.table}<span>Table</span><DropMark /></Tool>
          <Tool $w={37}>{icons.matrix}<span>Matrix</span><DropMark /></Tool>
          <Tool $w={37}>{icons.list}<span>List</span></Tool>
        </Group>
        <Group w={255} title="Data Visualizations">
          <Tool $w={37}>{icons.chart}<span>Chart</span><DropMark /></Tool>
          <Tool $w={38}>{icons.gauge}<span>Gauge</span></Tool>
          <Tool $w={36}>{icons.map}<span>Map</span><DropMark /></Tool>
          <Tool $w={36}>{icons.dataBar}<span>Data<br />Bar</span></Tool>
          <Tool $w={50}>{icons.spark}<span>Sparkline</span></Tool>
          <Tool $w={50} $on>{icons.indicator}<span>Indicator</span></Tool>
        </Group>
        <Group w={173} title="Report Items">
          <Tool $w={38}>{icons.textBox}<span>Text<br />Box</span></Tool>
          <Tool $w={38}>{icons.image}<span>Image</span></Tool>
          <Tool $w={36}>{icons.line}<span>Line</span></Tool>
          <Tool $w={52}>{icons.rect}<span>Rectangle</span></Tool>
        </Group>
        <Group w={63} title="Subreports">
          <Tool $w={56}>{icons.subreport}<span>Subreport</span></Tool>
        </Group>
        <Group w={90} pad={8} title="Header &amp; Footer">
          <Tool $w={42}>{icons.header}<span>Header</span><DropMark /></Tool>
          <Tool $w={38}>{icons.footer}<span>Footer</span><DropMark /></Tool>
        </Group>
      </Ribbon>
      <Work>
        <DataPane>
          <PaneTitle>
            Report Data
            <button aria-label="Close pane">
              <svg width="8" height="8" viewBox="0 0 8 8" stroke="#fff" strokeWidth="2" aria-hidden="true"><path d="M1 0l6 8M7 0L1 8" /></svg>
            </button>
          </PaneTitle>
          <PaneTools>
            <button>New <svg width="5" height="3" viewBox="0 0 5 3" aria-hidden="true"><path d="M0 0h5L2.500 3z" fill="#000" /></svg></button>
            <button disabled>Edit...</button>
            <svg width="11" height="11" viewBox="0 0 11 11" stroke="#8a8a8a" strokeWidth="2.400" aria-hidden="true"><path d="M1 0l9 11M10 0L1 11" /></svg>
            <svg width="9" height="9" viewBox="0 0 9 9" fill="#8a8a8a" aria-hidden="true"><path d="M4.500 0L9 5H6.500v4h-4V5H0z" /></svg>
            <svg width="9" height="9" viewBox="0 0 9 9" fill="#8a8a8a" aria-hidden="true"><path d="M4.500 9L9 4H6.500V0h-4v4H0z" /></svg>
          </PaneTools>
          <Tree>
            {TREE.map(([name, open]) => (
              <li key={name}><Expander open={open} /><Folder />{name}</li>
            ))}
          </Tree>
        </DataPane>
        <Surface>
          <RulerTop><HorizontalRuler /></RulerTop>
          <CanvasRow>
            <RulerSide><VerticalRuler /></RulerSide>
            <Canvas><ReportSheet /></Canvas>
          </CanvasRow>
          <GroupPanes>
            <GroupPane>
              <h2><GridIcon />Row Groups</h2>
              <div><GroupItem>Product_Category_Name<Caret $color="#000" $boxed /></GroupItem></div>
            </GroupPane>
            <GroupPane>
              <h2><GridIcon vertical />Column Groups<Caret $color="#a6a6a6" /></h2>
              <div><GroupItem>Channel_Name<Caret $color="#000" $boxed /></GroupItem></div>
            </GroupPane>
          </GroupPanes>
        </Surface>
      </Work>
      <Mark $x={364} $y={34} $w={52} $h={73} $color={RED} />
      <Mark $x={560} $y={302} $w={70} $h={41} $color={YELLOW} />
      <Caption $x={438} $y={47}>
        On the ribbon, click the Rectangle icon, and then click inside the [Sum(Net_Sales)] cell in the
        <br />
        [Product_Category_Name] row group in the Total column group.
      </Caption>
      <Caption $x={459} $y={151} $z={1}>Then On the ribbon, click the Indicator icon, and then click inside the rectangle!</Caption>
      <IndicatorDialog />
      <Mark $x={781} $y={228} $w={88} $h={40} $color={RED} />
      <Mark $x={998} $y={583} $w={82} $h={41} $color={YELLOW} />
      <Caption $x={355} $y={536}>Finally Click the 3-Directional Signs type in the red-marked area , and then click OK!</Caption>
    </Panel>
  );
}

/* ---------- panel 3 : binding the indicator ---------- */

const Clip = styled.div`
  height: 386px;
  padding-left: 3px;
  background: #767676;
  overflow: hidden;
`;

const Selection = styled.svg`
  position: absolute;
  left: 346px;
  top: 141px;
  z-index: 1;
`;

const SelectionTop = styled(Selection)`
  z-index: 6;
`;

const GaugePane = styled.div`
  position: absolute;
  left: 417px;
  top: 147px;
  z-index: 2;
  width: 173px;
  border: 1px solid #4a4a4a;
  background: #202020;
  color: #fff;
  h2 { height: 15px; padding-left: 5px; line-height: 16px; }
`;

const GaugeTools = styled.div`
  display: flex;
  align-items: center;
  gap: 6px;
  height: 20px;
  padding-left: 4px;
  background: #444;
`;

const GaugeLabel = styled.div`
  display: flex;
  align-items: center;
  gap: 5px;
  height: 21px;
  padding-left: 5px;
  i { color: #777; font: 9px/13px "DejaVu Serif", serif; }
`;

const GaugeList = styled.div`
  display: grid;
  justify-items: end;
  gap: 1px;
  margin: 0 2px 2px;
  padding: 2px 2px 3px;
  border: 1px solid #8a8a8a;
  background: #fff;
`;

const GaugeItem = styled.button<{ $w: string }>`
  display: flex;
  align-items: center;
  gap: 5px;
  width: ${(p) => p.$w};
  height: 15px;
  padding-left: 2px;
  border: 1px solid #666;
  background: #333;
  color: #fff;
  ${Caret} { margin-left: auto; border-left: 1px solid #777; }
`;

const Menu = styled.ul`
  && { padding: 1px 1px 2px; }
  position: absolute;
  left: 566px;
  top: 237px;
  z-index: 3;
  width: 179px;
  border: 1px solid #c4c4c4;
  background: #fff;
  font-size: 10px;
  hr { margin: 2px 0 2px 27px; border: 0; border-top: 1px solid #b9b9b9; }
`;

const MenuItem = styled.button<{ $on?: boolean }>`
  display: flex;
  align-items: center;
  gap: 14px;
  width: 100%;
  height: 19px;
  padding-left: 3px;
  background: ${(p) => (p.$on ? "#c8c8c8" : "transparent")};
  font-size: 10px;
  i { width: 13px; font: italic 700 10px/13px "Liberation Serif", serif; text-align: center; }
`;

const FieldIcon = () => (
  <svg width="13" height="11" viewBox="0 0 13 11" aria-hidden="true">
    <path d="M.5.500h12v10H.5z" fill="#f3efe2" stroke="#8d8062" />
    <path d="M2.500 3.500h3M7 3.500h3.500M2.500 5.500h3M7 5.500h2M2.500 7.500h3M7 7.500h3.500" stroke="#2c3a86" />
  </svg>
);

const FIELDS = ["Channel_Name", "Product_Category_Name", "Net_QTY", "Net_Sales"];

function BindPanel() {
  return (
    <Panel $drop={169}>
      <Clip><ReportSheet finished /></Clip>
      <Selection width="76" height="54" viewBox="0 0 76 54" fill="none" aria-hidden="true">
        <path d="M4.500 6.500h66v42h-66z" stroke="#000" strokeDasharray="1 1" />
        <path d="M1.500 47.500h5v4h-5zM34.500 47.500h5v4h-5zM68.500 47.500h4v4h-4zM68.500 3.500h4v4h-4z" fill="#fff" stroke="#000" />
      </Selection>
      <Mark $x={348} $y={138} $w={68} $h={48} $color={RED} />
      <SelectionTop width="76" height="54" viewBox="0 0 76 54" fill="none" aria-hidden="true">
        <path d="M13.500 10.500h49v27h-49z" stroke="#000" strokeDasharray="2 2" />
        {[[13, 10], [38, 10], [63, 10], [13, 24], [63, 24], [13, 37], [38, 37], [63, 37]].map(([x, y]) => (
          <circle key={`${x}-${y}`} cx={x} cy={y} r="2.500" fill="#fff" stroke="#000" />
        ))}
        <path d="M13.500 1.500h12v11h-12z" fill="#dbe5f3" stroke="#8c9cb5" />
        <path d="M19.500 2v10M14 7h11M18 4l1.500-2L21 4M18 10l1.500 2 1.500-2M16 5.500L14 7l2 1.500M23 5.500L25 7l-2 1.500" stroke="#000" />
      </SelectionTop>
      <GaugePane>
        <h2>Gauge Data</h2>
        <GaugeTools>
          <svg width="12" height="13" viewBox="0 0 12 13" aria-hidden="true">
            <path d="M0 0h12v13H0z" fill="#fff" /><path d="M0 0h12v3H0z" fill={B} /><path d="M2 6h2M6 6h4M2 10h2M6 10h4" stroke="#444" />
          </svg>
          <svg width="12" height="11" viewBox="0 0 12 11" stroke="#707070" strokeWidth="1.600" aria-hidden="true"><path d="M1 0l10 11M11 0L1 11" /></svg>
        </GaugeTools>
        <GaugeLabel><i>Σ</i>Values</GaugeLabel>
        <GaugeList>
          <GaugeItem $w="100%">
            <svg width="11" height="12" viewBox="0 0 11 12" aria-hidden="true"><path d="M5.500 0L11 6l-5.500 6L0 6z" fill="#d8492a" stroke="#f0a58f" strokeWidth=".6" /></svg>
            Indicator1
            <Caret $color="#b5b5b5" />
          </GaugeItem>
          <GaugeItem $w="146px">(Unspecified)<Caret $color="#b5b5b5" /></GaugeItem>
        </GaugeList>
      </GaugePane>
      <Menu>
        {FIELDS.map((f) => (
          <li key={f}><MenuItem $on={f === "Net_QTY"}><FieldIcon />{f}</MenuItem></li>
        ))}
        <li>
          <hr />
          <MenuItem><i>fx</i>Expression...</MenuItem>
        </li>
      </Menu>
      <Mark $x={435} $y={219} $w={74} $h={24} $color={YELLOW} />
      <Mark $x={566} $y={272} $w={89} $h={29} $color={YELLOW} />
      <Caption $x={-16} $y={-39}>Now click the indicator in the red-marked area by using the mouse's right button !</Caption>
      <Caption $x={-87} $y={358}>Swicth the setting (Unspecified) To Net_QTY in "Gauge Data" pane in the yellow-marked area !</Caption>
    </Panel>
  );
}

export default function App() {
  return (
    <>
      <GlobalStyle />
      <Page>
        <RunPanel />
        <StepArrow $drop={320} $indent={29}>
          <svg width="93" height="64" viewBox="0 0 93 64" fill="none" stroke={RED} strokeWidth="4.500" strokeLinejoin="round" aria-hidden="true">
            <path d="M2.500 17.500H49V2.500L90.500 32 49 61.500V46.500H2.500z" />
          </svg>
        </StepArrow>
        <DesignPanel />
        <StepArrow $drop={347} $indent={50}>
          <svg width="130" height="95" viewBox="0 0 130 95" fill="none" stroke="#000" strokeWidth="4.500" strokeLinejoin="round" aria-hidden="true">
            <path d="M2.500 25H65V2.500L127 47.500 65 92.500V70.500H2.500z" />
          </svg>
        </StepArrow>
        <BindPanel />
      </Page>
    </>
  );
}
